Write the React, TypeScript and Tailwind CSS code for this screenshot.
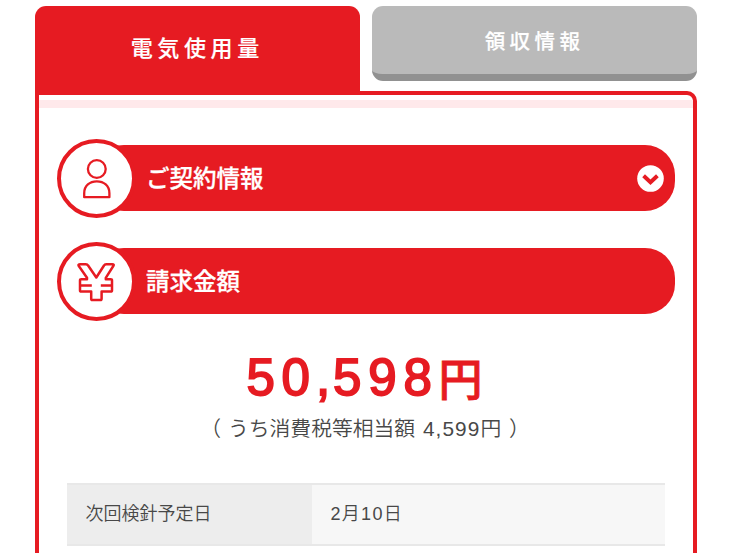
import React from 'react';

const ROWS = [{ label: '次回検針予定日', value: '2月10日' }];

function UserIcon() {
  return (
    <svg width="32" height="44" viewBox="0 0 32 44" fill="none" stroke="#e61b22" strokeWidth="2.3">
      <circle cx="15.8" cy="12" r="8.9" />
      <path d="M3.2 40.2V36.2C3.2 28.8 8.8 24.3 15.8 24.3S28.4 28.8 28.4 36.2V40.2Z" strokeLinejoin="round" />
    </svg>
  );
}

function YenIcon() {
  return (
    <svg width="40" height="40" viewBox="0 0 40 40" fill="none" stroke="#e61b22" strokeWidth="2.5" strokeLinejoin="round">
      <path d="M3.2 2.2H8.8Q10.4 2.2 11.1 3.5L19.3 15.5L27 3.5Q27.7 2.2 29.2 2.2H35.2Q37.5 2.2 36.3 4L28.8 15.8V17.3H33.6Q35 17.3 35 18.4V28.4Q35 29.6 33.6 29.6H24.6V36.8Q24.6 38.1 23.3 38.1H15.4Q14.2 38.1 14.2 36.8V29.6H4.4Q3 29.6 3 28.4V18.4Q3 17.3 4.4 17.3H10V15.8L1.8 4Q.7 2.2 3.2 2.2Z" />
      <path d="M3.4 23.4H14.8M23.8 23.4H35" />
    </svg>
  );
}

function SectionHeading({ icon, title, toggle = false }: { icon: React.ReactNode; title: string; toggle?: boolean }) {
  return (
    <div className="flex h-[79px] items-center">
      <div className="z-10 -ml-px flex size-[79px] shrink-0 items-center justify-center rounded-full border-4 border-[#e61b22] bg-white">
        {icon}
      </div>
      <h2 className="-mt-px -mr-px -ml-[42px] flex h-[66px] flex-1 items-center justify-between rounded-[30px] bg-[#e61b22] pr-[11px] pl-[52px] text-[23.5px] font-medium text-white [-webkit-text-stroke:0.3px_#fff]">
        <span className="-mt-px">{title}</span>
        {toggle && (
          <svg width="27" height="27" viewBox="0 0 27 27">
            <circle cx="13.5" cy="13.5" r="13.3" fill="#fff" />
            <path d="M6.6 10.8L13.5 17.2L20.4 10.8" fill="none" stroke="#e61b22" strokeWidth="4" />
          </svg>
        )}
      </h2>
    </div>
  );
}

export default function App() {
  return (
    <div className="h-[553px] overflow-hidden bg-white pt-[6px] pr-[39px] pl-[35px] font-['Noto_Sans_CJK_JP',sans-serif] text-[#484848]">
      <div className="flex h-[85px] items-start justify-between">
        <button className="flex h-[86px] w-[324.5px] items-center justify-center rounded-t-[11px] bg-[#e61b22] text-[22px] font-medium tracking-[4.6px] text-white [-webkit-text-stroke:0.2px_#fff]">
          <span className="pb-[5px]">電気使用量</span>
        </button>
        <button className="flex h-[75px] w-[325px] items-center justify-center rounded-[11px] border-b-[7px] border-[#919191] bg-[#bababa] text-[20.5px] font-medium tracking-[4.4px] text-white [-webkit-text-stroke:0.2px_#fff]">
          <span className="pt-px">領収情報</span>
        </button>
      </div>

      <main className="h-[480px] rounded-tr-[10px] border-4 border-[#e61b22] pt-[5px]">
        <div className="h-2 bg-[#ffe9eb]" />
        <div className="px-[19px] pt-[31px]">
          <SectionHeading icon={<UserIcon />} title="ご契約情報" toggle />
          <div className="h-6" />
          <SectionHeading icon={<YenIcon />} title="請求金額" />

          <p className="mt-[21px] flex h-[72px] items-center justify-center pr-[3px] text-[#e61b22]">
            <span className="font-['Liberation_Sans',sans-serif] text-[51px] tracking-[6.8px] [-webkit-text-stroke:1.9px_#e61b22]">
              5<span className="tracking-[6px]">0</span><span className="tracking-[3px]">,</span>598
            </span>
            <span className="pb-[2px] text-[44px] leading-none font-medium [-webkit-text-stroke:0.8px_#e61b22]">円</span>
          </p>
          <p className="pr-[2px] text-center font-['Liberation_Sans','Noto_Sans_CJK_JP',sans-serif] text-[20.8px] leading-[30px] font-[350] whitespace-pre">
            <span className="tracking-[0.6px]">（ </span>うち消費税等相当額 <span className="pl-[2px] tracking-[1.1px]">4,599</span>円<span className="pl-[2px]"> ）</span>
          </p>

          <dl className="mx-[9px] mt-[39px]">
            {ROWS.map((row) => (
              <div key={row.label} className="flex h-[63px] border-y-2 border-[#e8e8e8] font-['Liberation_Sans','Noto_Sans_CJK_JP',sans-serif] text-[18px] font-[350]">
                <dt className="flex w-[245px] items-center bg-[#ededed] pb-px pl-[18.5px]">{row.label}</dt>
                <dd className="flex flex-1 items-center bg-[#f7f7f7] pb-px pl-[18.5px] tracking-[1.3px]">{row.value}</dd>
              </div>
            ))}
          </dl>
        </div>
      </main>
    </div>
  );
}
